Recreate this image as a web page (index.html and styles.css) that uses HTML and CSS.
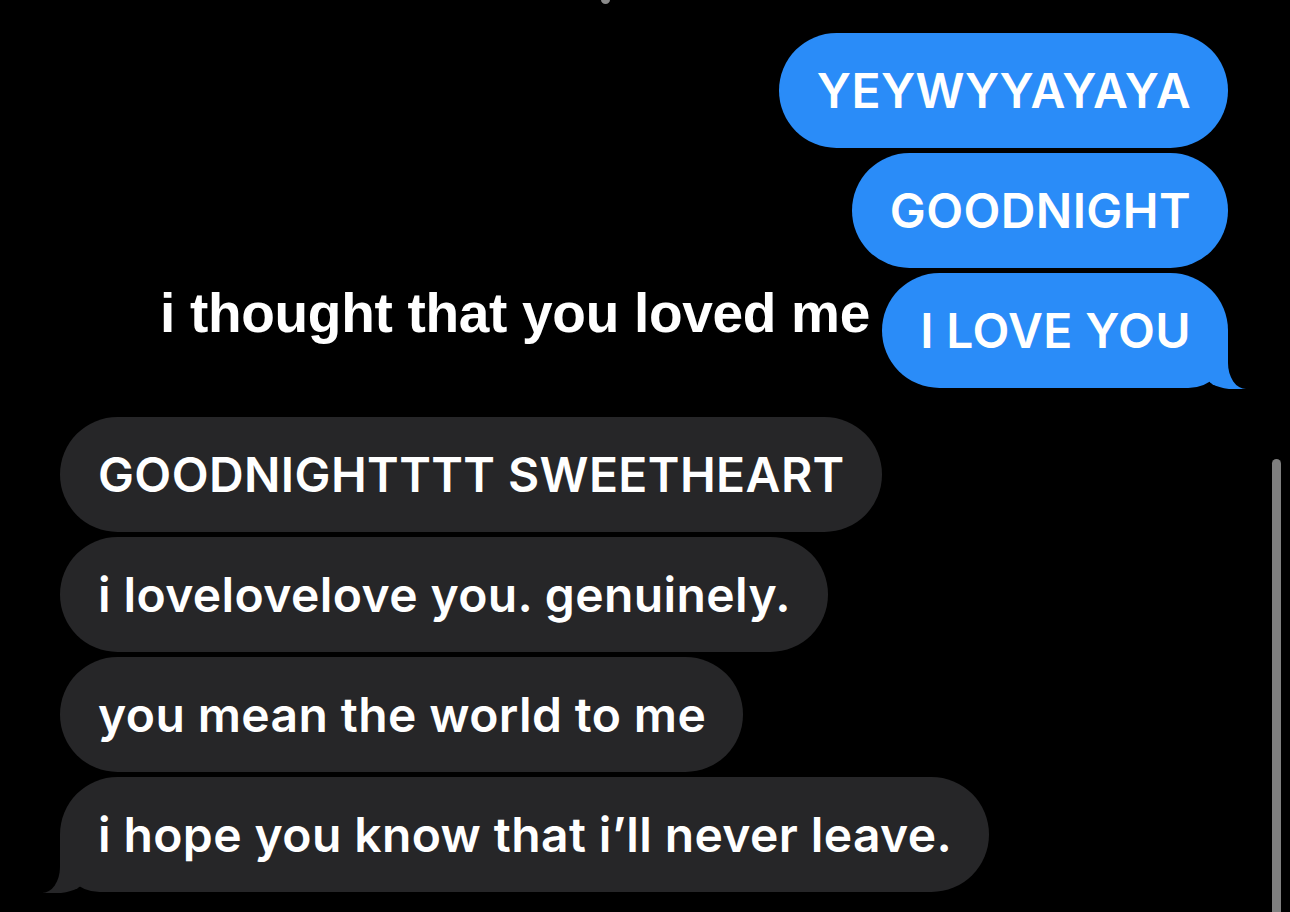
FILE: index.html
```html
<!DOCTYPE html>
<html lang="en">
<head>
<meta charset="UTF-8">
<meta name="viewport" content="width=device-width, initial-scale=1.0">
<title>Messages</title>
<link rel="stylesheet" href="styles.css">
</head>
<body>
    <div class="screen">
        <!-- 보낸 메시지 (파란색) -->
        <div class="group sent">
            <div class="bubble">YEYWYYAYAYA</div>
            <div class="bubble">GOODNIGHT</div>
            <div class="bubble tail">I LOVE YOU</div>
        </div>
        <!-- 받은 메시지 (회색) -->
        <div class="group received">
            <div class="bubble">GOODNIGHTTTT SWEETHEART</div>
            <div class="bubble">i lovelovelove you. genuinely.</div>
            <div class="bubble">you mean the world to me</div>
            <div class="bubble tail">i hope you know that i’ll never leave.</div>
        </div>

        <!-- 화면 위에 얹은 자막 -->
        <div class="caption">i thought that you loved me</div>
        <div class="top-dot"></div>
        <div class="scrollbar"></div>
    </div>
</body>
</html>
```

FILE: styles.css
```css
html, body{
    margin: 0;
    padding: 0;
    background: #000;
}
.screen{
    position: relative;
    width: 1290px;
    height: 912px;
    overflow: hidden;
    font-family: Inter, "Liberation Sans", sans-serif;
    color: #fff;
}

/* 말풍선 묶음 */
.group{
    display: flex;
    flex-direction: column;
    gap: 5px;
}
.sent{
    align-items: flex-end;
    padding: 33px 62px 0 0;
}
.received{
    align-items: flex-start;
    padding: 29px 0 0 60px;
}

.bubble{
    position: relative;
    height: 115px;
    box-sizing: border-box;
    padding: 0 37px 0 38px;
    border-radius: 58px;
    display: flex;
    align-items: center;
    font-size: 48px;
    font-weight: 600;
    letter-spacing: 0.4px;
    white-space: nowrap;
}
.sent .bubble{
    background: #2a8cf8;
}
.received .bubble{
    background: #262628;
}

/* 꼬리 모양: before = 색 채우기, after = 검정으로 깎아내기 */
.bubble.tail::before,
.bubble.tail::after{
    content: "";
    position: absolute;
    bottom: -1px;
    height: 40px;
}
.bubble.tail::before{
    width: 39px;
}
.bubble.tail::after{
    width: 59px;
    background: #000;
}

.sent .bubble.tail{
    border-bottom-right-radius: 40px;
}
.sent .bubble.tail::before{
    right: -19px;
    background: #2a8cf8;
    border-bottom-left-radius: 26px 11px;
}
.sent .bubble.tail::after{
    right: -59px;
    border-bottom-left-radius: 18px 26px;
}

.received .bubble.tail{
    border-bottom-left-radius: 40px;
}
.received .bubble.tail::before{
    left: -17px;
    background: #262628;
    border-bottom-right-radius: 26px 11px;
}
.received .bubble.tail::after{
    left: -59px;
    border-bottom-right-radius: 18px 26px;
}

/* 자막 */
.caption{
    position: absolute;
    left: 160px;
    top: 286px;
    font-family: "Liberation Sans", Arial, sans-serif;
    font-size: 55px;
    line-height: 55px;
    font-weight: bold;
    letter-spacing: -0.3px;
    white-space: nowrap;
}

.top-dot{
    position: absolute;
    left: 601px;
    top: -4px;
    width: 9px;
    height: 8px;
    border-radius: 50%;
    background: #8a8a8a;
}

.scrollbar{
    position: absolute;
    left: 1272px;
    top: 459px;
    width: 9px;
    height: 460px;
    border-radius: 5px;
    background: #7f7f7f;
}
```
